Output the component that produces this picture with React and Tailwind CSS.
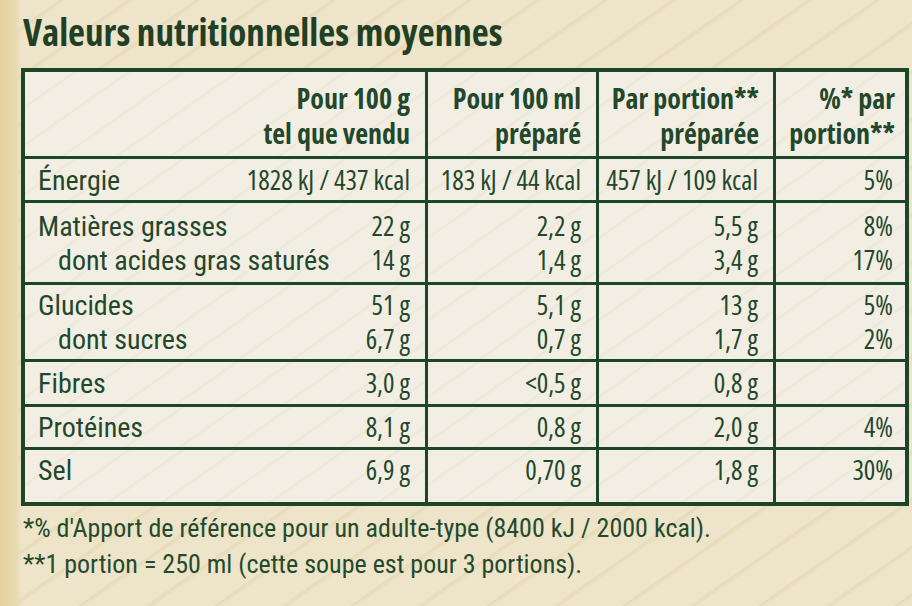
import React from "react";

const rows = [
  { items: [["Énergie", "1828 kJ / 437 kcal", "183 kJ / 44 kcal", "457 kJ / 109 kcal", "5%"]] },
  {
    items: [
      ["Matières grasses", "22 g", "2,2 g", "5,5 g", "8%"],
      ["dont acides gras saturés", "14 g", "1,4 g", "3,4 g", "17%", true],
    ],
  },
  {
    items: [
      ["Glucides", "51 g", "5,1 g", "13 g", "5%"],
      ["dont sucres", "6,7 g", "0,7 g", "1,7 g", "2%", true],
    ],
  },
  { items: [["Fibres", "3,0 g", "<0,5 g", "0,8 g", ""]] },
  { items: [["Protéines", "8,1 g", "0,8 g", "2,0 g", "4%"]] },
  { items: [["Sel", "6,9 g", "0,70 g", "1,8 g", "30%"]], top: true },
];

const cell = "bg-[#f2eee3] bg-[repeating-linear-gradient(145deg,transparent_0px,transparent_27px,rgba(214,196,150,0.16)_28px,transparent_31px)]";

export default function App() {
  return (
    <div
      className="w-[912px] h-[606px] overflow-hidden text-[#22472b] bg-[#eee4c9] bg-[linear-gradient(to_right,#e3d29f_0px,#e9dbb2_16px,transparent_22px),repeating-linear-gradient(145deg,transparent_0px,transparent_33px,rgba(205,180,120,0.2)_35px,transparent_39px)] pl-[21px] pt-[10px] [font-stretch:75%]"
      style={{ fontFamily: '"Open Sans", "Roboto Condensed", sans-serif' }}
    >
      <h1 className="pl-[2px] text-[37px] leading-[44px] font-bold text-[#213f24]">
        Valeurs nutritionnelles moyennes
      </h1>

      <div className="mt-[14px] w-[888px] border-4 border-[#1d4527] bg-[#1d4527] grid grid-cols-[400px_168px_174px_129px] grid-rows-[84px_41px_79px_74px_42px_40px_52px] gap-[3px] text-[27px] leading-[34px] whitespace-nowrap">
        {/* header */}
        <div className={`${cell} pr-[15px] pt-[9px] text-right font-bold text-[28px] leading-[35px]`}>
          <div>Pour 100 g</div>
          <div>tel que vendu</div>
        </div>
        <div className={`${cell} pr-[15px] pt-[9px] text-right font-bold text-[28px] leading-[35px]`}>
          <div>Pour 100 ml</div>
          <div>préparé</div>
        </div>
        <div className={`${cell} pr-[14px] pt-[9px] text-right font-bold text-[28px] leading-[35px]`}>
          <div>Par portion**</div>
          <div>préparée</div>
        </div>
        <div className={`${cell} pr-[10px] pt-[9px] text-right font-bold text-[28px] leading-[35px]`}>
          <div>%* par</div>
          <div>portion**</div>
        </div>

        {rows.map((r, ri) => (
          <React.Fragment key={ri}>
            <div className={`${cell} flex flex-col ${r.top ? "justify-start pt-[3px]" : "justify-center"} pl-[13px] pr-[15px]`}>
              {r.items.map((it, i) => (
                <div key={i} className="flex justify-between items-baseline h-[34px]">
                  <span className={`font-['Roboto_Condensed'] text-[28px] ${it[5] ? "pl-[20px]" : ""}`}>{it[0]}</span>
                  <span>{it[1]}</span>
                </div>
              ))}
            </div>
            {[2, 3, 4].map((c) => (
              <div
                key={c}
                className={`${cell} flex flex-col ${r.top ? "justify-start pt-[3px]" : "justify-center"} text-right ${c === 4 ? "pr-[12px]" : "pr-[15px]"}`}
              >
                {r.items.map((it, i) => (
                  <div key={i} className="h-[34px]">{it[c]}</div>
                ))}
              </div>
            ))}
          </React.Fragment>
        ))}
      </div>

      <div className="pl-[2px] pt-[4px] text-[26px] leading-[36px] text-[#234a2c] font-['Roboto_Condensed']">
        <div>*% d'Apport de référence pour un adulte-type (8400 kJ / 2000 kcal).</div>
        <div>**1 portion = 250 ml (cette soupe est pour 3 portions).</div>
      </div>
    </div>
  );
}
